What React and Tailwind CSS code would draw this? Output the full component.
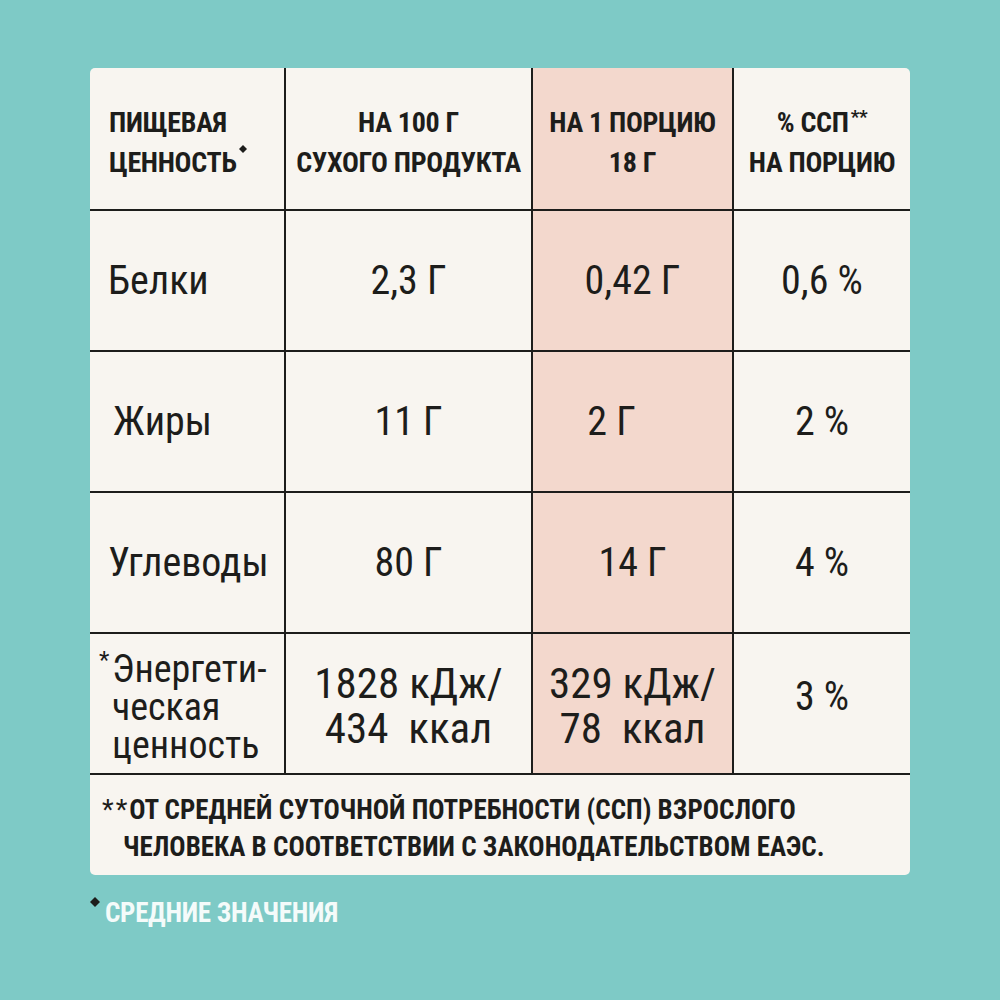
const font = { fontFamily: '"Roboto Condensed", "Open Sans", sans-serif' };

const Diamond = ({ className }) => (
	<svg viewBox="0 0 10 10" className={className}>
		<path d="M5 0 L10 5 L5 10 L0 5 Z" fill="currentColor" />
	</svg>
);

const rows = [
	{ name: "Белки", pad: "pl-[18px]", a: "2,3 Г", b: "0,42 Г", bPad: "", c: "0,6 %" },
	{ name: "Жиры", pad: "pl-[23px]", a: "11 Г", b: "2 Г", bPad: "pr-[42px]", c: "2 %" },
	{ name: "Углеводы", pad: "pl-[18px]", a: "80 Г", b: "14 Г", bPad: "", c: "4 %" },
];

const line = "border-[#1d1d1b]";

const App = () => {
	return (
		<div className="w-[1000px] h-[1000px] bg-[#7ecac6] pt-[68px] text-[#1d1d1b]" style={font}>
			<div className="w-[820px] mx-auto bg-[#f8f5f0] rounded-[5px] overflow-hidden">
				<div className="grid grid-cols-[196px_247px_201px_176px] grid-rows-[143px_141px_141px_141px_141px]">
					{/* header */}
					<div className={`border-r-2 border-b-2 ${line} flex items-center pl-[19px] pt-[8px] font-bold text-[28px] leading-[40px] tracking-[-0.3px]`}>
						<div>
							ПИЩЕВАЯ
							<br />
							<span className="relative">
								ЦЕННОСТЬ
								<Diamond className="absolute -right-[10px] -top-[1px] w-[8px] h-[8px]" />
							</span>
						</div>
					</div>
					<div className={`border-r-2 border-b-2 ${line} flex items-center justify-center pt-[8px] text-center font-bold text-[28px] leading-[40px] tracking-[-0.3px]`}>
						<div>
							НА 100 Г
							<br />
							СУХОГО ПРОДУКТА
						</div>
					</div>
					<div className={`border-r-2 border-b-2 ${line} bg-[#f3d8cd] flex items-center justify-center pt-[8px] text-center font-bold text-[28px] leading-[40px] tracking-[-0.3px]`}>
						<div>
							НА 1 ПОРЦИЮ
							<br />
							18 Г
						</div>
					</div>
					<div className={`border-b-2 ${line} flex items-center justify-center pt-[8px] text-center font-bold text-[28px] leading-[40px] tracking-[-0.3px]`}>
						<div>
							% ССП<span className="relative -top-[9px] ml-[2px] text-[19px] leading-none">**</span>
							<br />
							НА ПОРЦИЮ
						</div>
					</div>

					{rows.map((r) => (
						<div key={r.name} className="contents">
							<div className={`border-r-2 border-b-2 ${line} flex items-center text-[40px] ${r.pad}`}>{r.name}</div>
							<div className={`border-r-2 border-b-2 ${line} flex items-center justify-center text-[40px]`}>{r.a}</div>
							<div className={`border-r-2 border-b-2 ${line} bg-[#f3d8cd] flex items-center justify-center text-[40px] ${r.bPad}`}>{r.b}</div>
							<div className={`border-b-2 ${line} flex items-center justify-center text-[40px]`}>{r.c}</div>
						</div>
					))}

					{/* energy */}
					<div className={`border-r-2 border-b-2 ${line} flex items-center pl-[22px] pt-[6px] text-[38px] leading-[38px]`}>
						<div className="relative">
							<span className="absolute -left-[13px] -top-[2px] text-[24px] leading-none">*</span>
							Энергети-
							<br />
							ческая
							<br />
							ценность
						</div>
					</div>
					<div className={`border-r-2 border-b-2 ${line} flex items-center justify-center pt-[4px] text-center text-[43px] leading-[45px] whitespace-pre`}>
						<div>
							1828 кДж/
							<br />
							{"434  ккал"}
						</div>
					</div>
					<div className={`border-r-2 border-b-2 ${line} bg-[#f3d8cd] flex items-center justify-center pt-[4px] text-center text-[43px] leading-[45px] whitespace-pre`}>
						<div>
							329 кДж/
							<br />
							{"78  ккал"}
						</div>
					</div>
					<div className={`border-b-2 ${line} flex items-center justify-center pb-[14px] text-[40px]`}>3 %</div>
				</div>

				{/* footnote */}
				<div className="h-[100px] pt-[17px] font-bold text-[27px] leading-[37px] whitespace-nowrap">
					<div className="pl-[12px]">
						<span className="font-normal tracking-[2px]">**</span>ОТ СРЕДНЕЙ СУТОЧНОЙ ПОТРЕБНОСТИ (ССП) ВЗРОСЛОГО
					</div>
					<div className="pl-[33px]">ЧЕЛОВЕКА В СООТВЕТСТВИИ С ЗАКОНОДАТЕЛЬСТВОМ ЕАЭС.</div>
				</div>
			</div>

			<div className="w-[820px] mx-auto mt-[21px] flex items-start text-[#f4fbfa] font-bold text-[27px] leading-[34px] tracking-[-0.3px]">
				<Diamond className="w-[10px] h-[10px] mt-[1px] text-[#1d1d1b]" />
				<span className="ml-[5px]">СРЕДНИЕ ЗНАЧЕНИЯ</span>
			</div>
		</div>
	);
};

export default App;
